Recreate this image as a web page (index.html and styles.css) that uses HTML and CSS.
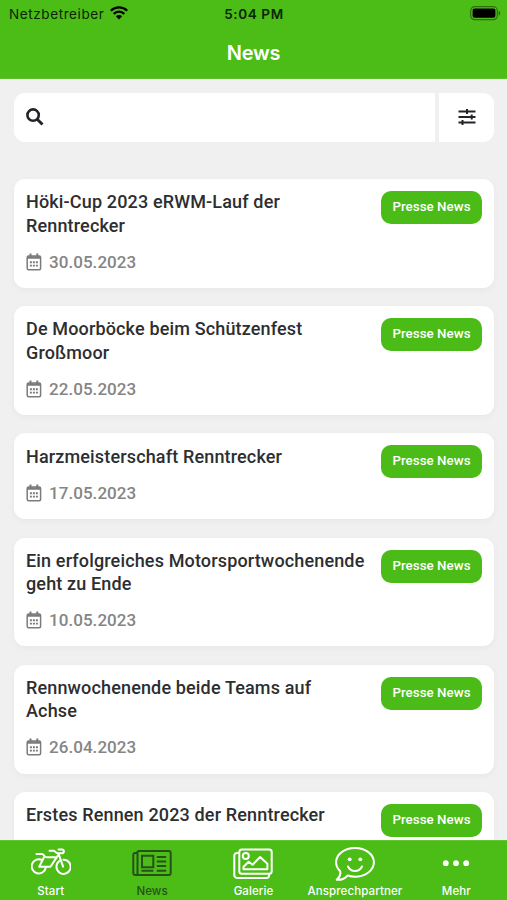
FILE: index.html
```html
<!DOCTYPE html>
<html lang="de">
<head>
<meta charset="utf-8">
<title>News</title>
<link rel="stylesheet" href="styles.css">
</head>
<body>
<svg class="defs" aria-hidden="true">
  <symbol id="calendar" viewBox="0 0 16 18">
    <rect x="1.200" y="3" width="13.400" height="13.700" rx="1.500" fill="none" stroke="currentColor" stroke-width="1.500"/>
    <path d="M1 3.200h13.800v2.600H1zM3.500.5h2v3h-2zM10.300.5h2v3h-2z" fill="currentColor"/>
    <path d="M3.900 9.200h8M3.900 12.600h8" stroke="currentColor" stroke-width="1.900" stroke-dasharray="2 1"/>
  </symbol>
</svg>
<div class="app">
  <header class="header">
    <div class="status">
      <div class="carrier">
        <span class="carrier-name">Netzbetreiber</span>
        <svg width="18" height="14" viewBox="0 0 18 14"><g fill="none" stroke="#000" stroke-width="2.200"><path d="M.8 4.700a11.600 11.600 0 0 1 16.400 0"/><path d="M3.700 7.900a7.500 7.500 0 0 1 10.600 0"/></g><path d="M5.900 10.300a4.400 4.400 0 0 1 6.200 0L9 13.600z"/></svg>
      </div>
      <span class="time">5:04 PM</span>
      <svg class="battery" width="31" height="15" viewBox="0 0 31 15"><rect x=".7" y=".7" width="26.600" height="13" rx="4" fill="none" stroke="#000" stroke-opacity=".4" stroke-width="1.200"/><rect x="2.600" y="2.600" width="22.800" height="9.200" rx="2"/><path d="M28.700 4.800c2 .7 2 4.100 0 4.800z" fill-opacity=".45"/></svg>
    </div>
    <h1 class="title">News</h1>
  </header>
  <main class="content">
    <div class="search">
      <div class="search-field"><svg width="18" height="18" viewBox="0 0 18 18" fill="none" stroke="#222428"><circle cx="7.100" cy="7.100" r="5.700" stroke-width="2.600"/><path d="m11.200 11.200 5.300 5.300" stroke-width="3"/></svg></div>
      <button class="filter" aria-label="Filter"><svg width="18" height="18" viewBox="0 0 18 18" stroke="#222428" stroke-width="2"><path d="M.5 3.500h17M.5 9h17M.5 14.500h17"/><path d="M9 1v5M13.700 6.500v5M4.500 12v5"/></svg></button>
    </div>
    <article class="card"><div class="info"><h2>Höki-Cup 2023 eRWM-Lauf der Renntrecker</h2><p class="date"><svg><use href="#calendar"/></svg>30.05.2023</p></div><span class="tag">Presse News</span></article>
    <article class="card"><div class="info"><h2>De Moorböcke beim Schützenfest Großmoor</h2><p class="date"><svg><use href="#calendar"/></svg>22.05.2023</p></div><span class="tag">Presse News</span></article>
    <article class="card"><div class="info"><h2>Harzmeisterschaft Renntrecker</h2><p class="date"><svg><use href="#calendar"/></svg>17.05.2023</p></div><span class="tag">Presse News</span></article>
    <article class="card"><div class="info"><h2>Ein erfolgreiches Motorsportwochenende geht zu Ende</h2><p class="date"><svg><use href="#calendar"/></svg>10.05.2023</p></div><span class="tag">Presse News</span></article>
    <article class="card"><div class="info"><h2>Rennwochenende beide Teams auf Achse</h2><p class="date"><svg><use href="#calendar"/></svg>26.04.2023</p></div><span class="tag">Presse News</span></article>
    <article class="card"><div class="info"><h2>Erstes Rennen 2023 der Renntrecker</h2></div><span class="tag">Presse News</span></article>
  </main>
  <nav class="tabs">
    <a class="tab"><svg viewBox="0 0 40 36" fill="none" stroke="currentColor" stroke-width="2" stroke-linecap="round" stroke-linejoin="round"><path d="M10.500 14.700A7.100 7.100 0 1 0 14.800 22.500M28.600 15.900a7.100 7.100 0 1 0 3.800-1.200"/><path d="M5.500 9h5.500c2 0 2.200 3.200 4.500 3.200h8.700M13 12.200 8.200 21.800h11.300l7.300-11.200M27.300 8.200l4.800 13.400M18.500 5.800h4c1.700 0 2 2.500 4.200 2.500h4c2.800 0 3-3.800.3-3.800h-3.500"/></svg><span>Start</span></a>
    <a class="tab active"><svg viewBox="0 0 40 36" fill="none" stroke="currentColor" stroke-width="2"><path d="M5.500 5.900h31.200c1.200 0 2 .8 2 2v20.200c0 1.200-.8 2-2 2H3.500c-1.400 0-2.200-.8-2.200-2V10c0-1.300.8-2 2-2h2.200"/><path d="M5.500 5.900v22c0 1.300-.8 2.200-2 2.200"/><path d="M10 10.800h11.300v11.400H10zM24.800 12h9.400M24.800 16.500h9.400M24.800 21.100h9.400M9.500 25.700h11.800M24.800 25.700h9.400"/></svg><span>News</span></a>
    <a class="tab"><svg viewBox="0 0 40 36" fill="none" stroke="currentColor" stroke-width="2" stroke-linejoin="round"><rect x="6.300" y="4.500" width="32.400" height="24.200" rx="2.500"/><path d="M6 8H4a2.700 2.700 0 0 0-2.700 2.700v19.500A2.700 2.700 0 0 0 4 32.900h29.500a2.700 2.700 0 0 0 2.700-2.700v-1.200"/><circle cx="12.800" cy="11" r="3"/><path d="M10.500 24.300v-2.600l5.200-5 3.900 3 7.500-7.700 7.300 6.800v5.500z"/></svg><span>Galerie</span></a>
    <a class="tab"><svg viewBox="0 0 40 36" fill="none" stroke="currentColor" stroke-width="2" stroke-linecap="round" stroke-linejoin="round"><path d="M5.200 26.200C2.500 23.700 1.100 20.500 1.100 17.300 1.100 9.300 9.500 2.900 20 2.900s18.900 6.400 18.900 14.400S30.500 31.700 20 31.700c-2.600 0-5-.4-7.300-1.200-3 3.500-6.500 4.700-11 4.300 2.600-2.300 4.400-4.500 3.500-8.600z"/><path d="M13 21.500c2.900 6.100 11.100 6.100 14 0"/><g fill="currentColor" stroke="none"><circle cx="14.700" cy="14.300" r="1.900"/><circle cx="25.300" cy="14.300" r="1.900"/></g></svg><span>Ansprechpartner</span></a>
    <a class="tab"><svg viewBox="0 0 40 36" fill="currentColor"><circle cx="9.800" cy="18.200" r="2.900"/><circle cx="20" cy="18.200" r="2.900"/><circle cx="30.200" cy="18.200" r="2.900"/></svg><span>Mehr</span></a>
  </nav>
</div>
</body>
</html>
```
FILE: styles.css
```css
* { box-sizing: border-box; }
body { margin: 0; background: #f0f0f1; font-family: Roboto, sans-serif; }
h1, h2, p { margin: 0; }
.defs { display: none; }
.app { height: 900px; display: flex; flex-direction: column; overflow: hidden; }
.header { flex: none; height: 79px; background: #4cbc17; border-bottom: 1px solid #5dc22c; font-family: Inter, sans-serif; }
.status { display: grid; grid-template-columns: 1fr auto 1fr; align-items: center; height: 27px; padding: 0 6px 0 9px; font-size: 13px; color: #0b2503; }
.carrier { display: flex; align-items: center; gap: 6px; }
.carrier svg { margin-top: -1px; }
.carrier-name { font-size: 13.500px; letter-spacing: .6px; }
.time { margin-left: -2px; font-size: 13.500px; font-weight: 600; letter-spacing: .6px; }
.battery { justify-self: end; }
.title { margin-top: 12px; text-align: center; color: #fff; font-size: 20px; line-height: 28px; font-weight: 600; letter-spacing: -.2px; }
.content { flex: 1; min-height: 0; overflow: hidden; padding: 14px 13px 0 13.500px; }
.search { display: flex; gap: 4px; height: 49px; margin-bottom: 37.200px; }
.search-field { flex: 1; display: flex; align-items: center; padding: 0 0 1px 12px; background: #fff; border-radius: 11px 0 0 11px; }
.filter { display: grid; place-items: center; width: 55px; padding: 0 0 1px; border: 0; background: #fff; border-radius: 0 11px 11px 0; }
.card { display: flex; justify-content: space-between; align-items: flex-start; min-height: 86px; margin-bottom: 18.200px; padding: 11.200px 12px 12.300px 12.500px; background: #fff; border-radius: 11px; box-shadow: 0 2px 7px rgba(0, 0, 0, .04); }
.info { width: 340px; }
.card h2 { font-size: 18px; line-height: 23.200px; font-weight: 500; letter-spacing: .15px; color: #2d2e30; }
.date { display: flex; align-items: center; gap: 7.500px; height: 24px; margin: 13px 0 2px; font-size: 17px; letter-spacing: .05px; font-weight: 500; color: #858585; }
.date svg { width: 16px; height: 18px; margin-left: -.5px; color: #7b7b7b; }
.tag { flex: none; width: 101px; height: 33px; margin-top: .8px; border-radius: 10px; background: #4abb17; color: #fff; font-size: 13.300px; line-height: 32px; font-weight: 500; text-align: center; letter-spacing: .05px; }
.tabs { flex: none; display: grid; grid-template-columns: repeat(5, 1fr); height: 60px; background: #4cbc17; border-top: 1px solid #60c32f; color: #fff; font-family: Inter, sans-serif; }
.tab { display: flex; flex-direction: column; align-items: center; padding-top: 4px; font-size: 11.500px; line-height: 16px; font-weight: 500; letter-spacing: .1px; }
.tab svg { width: 40px; height: 36px; }
.tab span { margin-top: 2px; }
.active { color: #26521a; }
```
